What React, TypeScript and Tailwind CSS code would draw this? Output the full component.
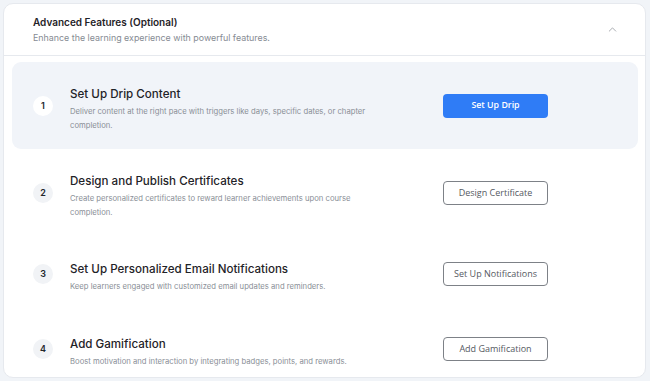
import { ChevronUp } from "lucide-react";

const steps = [
  {
    n: 1,
    title: "Set Up Drip Content",
    desc: "Deliver content at the right pace with triggers like days, specific dates, or chapter completion.",
    action: "Set Up Drip",
    primary: true,
    h: "h-[87px]",
  },
  {
    n: 2,
    title: "Design and Publish Certificates",
    desc: "Create personalized certificates to reward learner achievements upon course completion.",
    action: "Design Certificate",
    primary: false,
    h: "h-[88px]",
  },
  {
    n: 3,
    title: "Set Up Personalized Email Notifications",
    desc: "Keep learners engaged with customized email updates and reminders.",
    action: "Set Up Notifications",
    primary: false,
    h: "h-[73px]",
  },
  {
    n: 4,
    title: "Add Gamification",
    desc: "Boost motivation and interaction by integrating badges, points, and rewards.",
    action: "Add Gamification",
    primary: false,
    h: "h-[78px]",
  },
];

export default function App() {
  return (
    <div className="h-[381px] w-[650px] overflow-hidden bg-[#f1f4f8] pl-[3px] pt-[3px] font-['Inter',sans-serif]">
      <div className="h-[375px] w-[643px] overflow-hidden rounded-[10px] border border-[#e6e9ee] bg-white">
        {/* Header */}
        <div className="flex h-[52px] items-center justify-between border-b border-[#e6e9ee] pl-[29px] pr-[26px]">
          <div>
            <h2 className="text-[10px] font-semibold leading-[14px] text-[#1f2328]">Advanced Features (Optional)</h2>
            <p className="mt-[3px] text-[8.9px] leading-[12px] text-[#868b93]">
              Enhance the learning experience with powerful features.
            </p>
          </div>
          <ChevronUp className="h-[13px] w-[13px] text-[#8d9198]" strokeWidth={1.4} />
        </div>

        {/* Steps */}
        <div className="pl-[8px] pr-[7px] pt-[6px]">
          {steps.map((s) => (
            <div
              key={s.n}
              className={`flex items-center rounded-[9px] pl-[21px] ${s.h} ${s.primary ? "bg-[#f1f4f9]" : ""}`}
            >
              <div
                className={`flex h-[20px] w-[20px] shrink-0 items-center justify-center rounded-full text-[9px] font-semibold text-[#22262b] ${
                  s.primary ? "bg-white" : "bg-[#f1f3f6]"
                }`}
              >
                {s.n}
              </div>
              <div className="ml-[17px] mt-[7px] w-[300px]">
                <h3 className="text-[11.6px] font-medium leading-[16px] text-[#1f2328]">{s.title}</h3>
                <p className="mt-[3px] text-[7.7px] leading-[14px] text-[#8a8f97]">{s.desc}</p>
              </div>
              <button
                className={`ml-auto mr-[90px] h-[24px] w-[105px] rounded-[4px] font-['Open_Sans',sans-serif] ${
                  s.primary
                    ? "bg-[#2f7cf6] text-[8.8px] font-semibold text-white"
                    : "border border-[#7d8187] bg-white text-[9px] font-medium text-[#55595f]"
                }`}
              >
                {s.action}
              </button>
            </div>
          ))}
        </div>
      </div>
    </div>
  );
}
